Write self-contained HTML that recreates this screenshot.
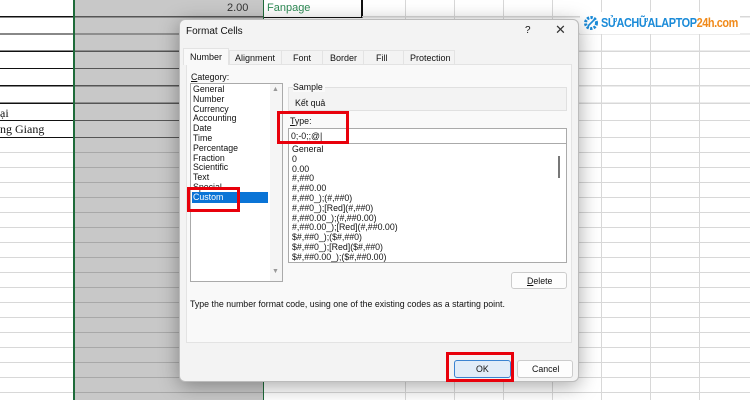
<!DOCTYPE html>
<html><head><style>
*{margin:0;padding:0;box-sizing:border-box}
body{width:750px;height:400px;overflow:hidden;position:relative;background:#fff;font-family:"Liberation Sans",sans-serif}
.a{position:absolute}
.t{font-size:8.8px;color:#111;position:absolute;white-space:nowrap}
</style></head><body>
<div class="a" style="left:0;top:138px;width:750px;height:262px;background:repeating-linear-gradient(to bottom,transparent 0 14px,#d8d8d8 14px 15px)"></div>
<div class="a" style="left:0;top:0;width:73px;height:138px;background:repeating-linear-gradient(to bottom,#fff 0 16px,#111 16px 17.3px)"></div>
<div class="a" style="left:75px;top:0;width:188px;height:400px;background:#c8c8c8"></div>
<div class="a" style="left:75px;top:0;width:188px;height:138px;background:repeating-linear-gradient(to bottom,transparent 0 16px,#555 16px 17.3px)"></div>
<div class="a" style="left:75px;top:138px;width:188px;height:262px;background:repeating-linear-gradient(to bottom,transparent 0 14px,#a8a8a8 14px 15px)"></div>
<div class="a" style="left:73px;top:0;width:2px;height:400px;background:#1e6b3a"></div>
<div class="a" style="left:263px;top:0;width:1px;height:400px;background:#1e6b3a"></div>
<div class="a" style="left:264px;top:0;width:98px;height:18px;border-bottom:1.5px solid #111"></div>
<div class="a" style="left:361px;top:0;width:1.5px;height:18px;background:#111"></div>
<div class="a" style="left:362px;top:0;width:388px;height:138px;background:repeating-linear-gradient(to bottom,transparent 0 16px,#d8d8d8 16px 17.3px)"></div>
<div class="a" style="left:362px;top:0;width:388px;height:400px;background:repeating-linear-gradient(to right,transparent 0 48px,#d8d8d8 48px 49px);background-position:-5px 0"></div>
<div class="t" style="left:227px;top:2px;font-size:11px;color:#333">2.00</div>
<div class="t" style="left:267px;top:2px;font-size:11px;color:#2e8a55">Fanpage</div>
<div class="t" style="left:0;top:106px;font-size:12px;font-family:'Liberation Serif',serif">ại</div>
<div class="t" style="left:0;top:122px;font-size:12px;font-family:'Liberation Serif',serif">ng Giang</div>
<div class="a" style="left:580px;top:12px;width:160px;height:22px;background:#fff"></div>
<svg class="a" style="left:583px;top:15px" width="16" height="16" viewBox="0 0 16 16"><circle cx="8" cy="8" r="5.5" fill="none" stroke="#1b8bd8" stroke-width="3" stroke-dasharray="2.3 1.3"/><circle cx="8" cy="8" r="3.6" fill="#fff"/><path d="M5 11 L9 7 L11 5" stroke="#1b8bd8" stroke-width="1.6"/></svg>
<div class="t" style="left:601px;top:15px;font-size:13px;font-weight:bold;letter-spacing:-0.5px;color:#1b8bd8;transform:scaleX(0.84);transform-origin:left">SỬACHỮALAPTOP<span style="color:#f08a1a">24h.com</span></div>
<div class="a" style="left:179px;top:19px;width:400px;height:363px;background:#f3f3f3;border:1px solid #bbb;border-radius:6px;box-shadow:0 4px 20px rgba(0,0,0,.35)"></div>
<div class="t" style="left:186px;top:26px;font-size:10px">Format Cells</div>
<div class="t" style="left:525px;top:25px;font-size:10px">?</div>
<div class="t" style="left:555px;top:22px;font-size:13px;color:#333">✕</div>
<div class="a" style="left:186px;top:64px;width:386px;height:279px;background:#f9f9f9;border:1px solid #e3e3e3"></div>
<div class="a" style="left:183px;top:48px;width:46px;height:17px;background:#f9f9f9;border:1px solid #e3e3e3;border-bottom:none"></div>
<div class="a" style="left:229px;top:50px;width:226px;height:14px;border:1px solid #e3e3e3;border-bottom:none"></div>
<div class="t" style="left:190px;top:52px;font-size:9px">Number</div>
<div class="t" style="left:235px;top:53px;font-size:9px">Alignment</div>
<div class="t" style="left:293px;top:53px;font-size:9px">Font</div>
<div class="t" style="left:330px;top:53px;font-size:9px">Border</div>
<div class="t" style="left:376px;top:53px;font-size:9px">Fill</div>
<div class="t" style="left:410px;top:53px;font-size:9px">Protection</div>
<div class="a" style="left:281px;top:50px;width:1px;height:14px;background:#e3e3e3"></div>
<div class="a" style="left:322px;top:50px;width:1px;height:14px;background:#e3e3e3"></div>
<div class="a" style="left:363px;top:50px;width:1px;height:14px;background:#e3e3e3"></div>
<div class="a" style="left:403px;top:50px;width:1px;height:14px;background:#e3e3e3"></div>
<div class="t" style="left:191px;top:72px"><u>C</u>ategory:</div>
<div class="a" style="left:190px;top:83px;width:93px;height:199px;background:#fff;border:1px solid #aaa"></div>
<div class="a" style="left:270px;top:84px;width:12px;height:197px;background:#f5f5f5"></div>
<div class="t" style="left:272px;top:86px;font-size:7px;color:#999">▲</div>
<div class="t" style="left:272px;top:268px;font-size:7px;color:#999">▼</div>
<div class="a" style="left:192px;top:192px;width:76px;height:11px;background:#0a74d6"></div>
<div class="t" style="left:193px;top:85px;line-height:9.8px">General<br>Number<br>Currency<br>Accounting<br>Date<br>Time<br>Percentage<br>Fraction<br>Scientific<br>Text<br>Special<br><span style="color:#fff">Custom</span></div>
<div class="a" style="left:288px;top:87px;width:279px;height:24px;border:1px solid #e0e0e0;background:#f3f3f3"></div>
<div class="t" style="left:293px;top:82px;background:#f9f9f9;padding-right:2px">Sample</div>
<div class="t" style="left:295px;top:98px">Kết quả</div>
<div class="t" style="left:290px;top:116px"><u>T</u>ype:</div>
<div class="a" style="left:288px;top:128px;width:279px;height:16px;background:#fff;border:1px solid #aaa"></div>
<div class="t" style="left:291px;top:131px">0;-0;;@|</div>
<div class="a" style="left:288px;top:143px;width:279px;height:120px;background:#fff;border:1px solid #aaa"></div>
<div class="a" style="left:558px;top:156px;width:2px;height:22px;background:#777"></div>
<div class="t" style="left:292px;top:145px;line-height:9.8px">General<br>0<br>0.00<br>#,##0<br>#,##0.00<br>#,##0_);(#,##0)<br>#,##0_);[Red](#,##0)<br>#,##0.00_);(#,##0.00)<br>#,##0.00_);[Red](#,##0.00)<br>$#,##0_);($#,##0)<br>$#,##0_);[Red]($#,##0)<br>$#,##0.00_);($#,##0.00)</div>
<div class="a" style="left:511px;top:272px;width:56px;height:17px;background:#fdfdfd;border:1px solid #ccc;border-radius:3px"></div>
<div class="t" style="left:527px;top:276px"><u>D</u>elete</div>
<div class="t" style="left:190px;top:299px">Type the number format code, using one of the existing codes as a starting point.</div>
<div class="a" style="left:454px;top:360px;width:57px;height:18px;background:#e1ecf8;border:1px solid #3b83d1;border-radius:3px"></div>
<div class="t" style="left:476px;top:364px">OK</div>
<div class="a" style="left:517px;top:360px;width:56px;height:18px;background:#fdfdfd;border:1px solid #ccc;border-radius:3px"></div>
<div class="t" style="left:532px;top:364px">Cancel</div>
<div class="a" style="left:277px;top:111px;width:72px;height:33px;border:3px solid #e8000b"></div>
<div class="a" style="left:187px;top:187px;width:53px;height:25px;border:3px solid #e8000b"></div>
<div class="a" style="left:446px;top:352px;width:68px;height:30px;border:3px solid #e8000b"></div>
</body></html>
